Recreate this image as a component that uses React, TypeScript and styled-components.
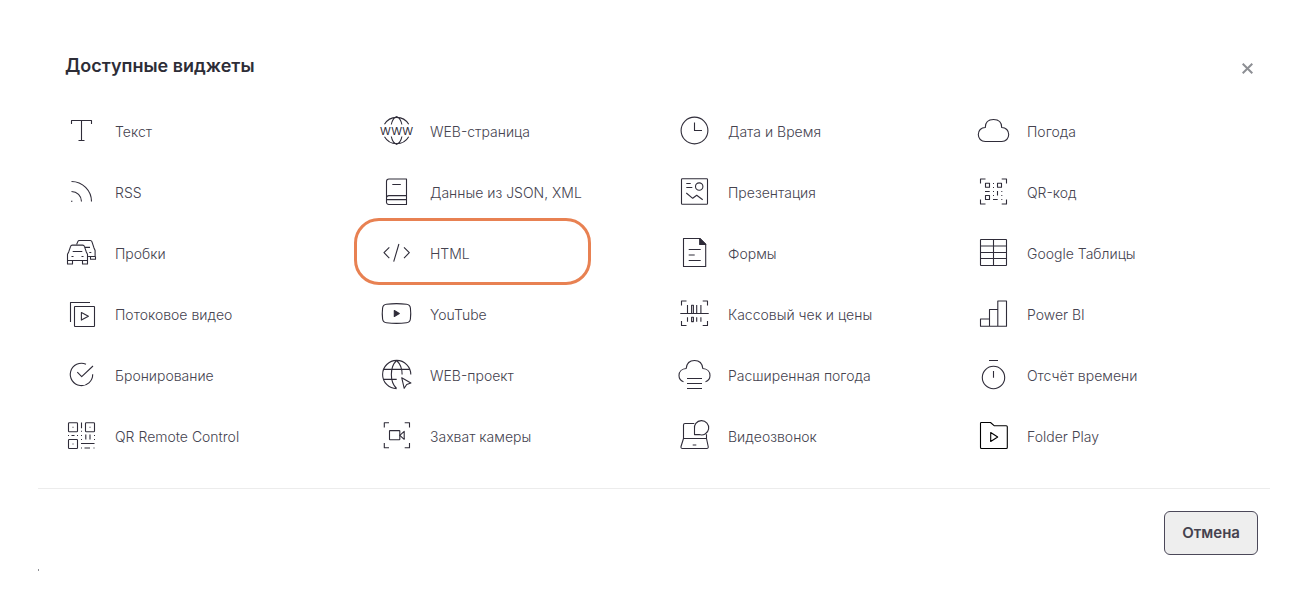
import React from "react";
import styled, { createGlobalStyle } from "styled-components";

const GlobalStyle = createGlobalStyle`
  *, *::before, *::after { box-sizing: border-box; }
  body {
    margin: 0;
    background: #ffffff;
    color: #45434f;
    font-family: Inter, "Open Sans", sans-serif;
  }
`;

const Dialog = styled.section`
  margin: 0 37px 0 38px;
  padding-top: 48px;
`;

const Header = styled.header`
  display: flex;
  align-items: center;
  justify-content: space-between;
  height: 36px;
  padding: 0 12px 0 27px;
`;

const Title = styled.h1`
  margin: 0;
  color: #2d2d37;
  font-size: 18px;
  font-weight: 600;
  line-height: 36px;
`;

const CloseButton = styled.button`
  display: grid;
  place-items: center;
  width: 21px;
  height: 21px;
  margin-top: 5px;
  padding: 0;
  border: 0;
  background: none;
  color: #8d8f94;
  cursor: pointer;
`;

const WidgetGrid = styled.ul`
  display: grid;
  grid-template-columns: 315fr 298fr 299fr 293fr;
  row-gap: 1px;
  margin: 0;
  padding: 17px 0 22px 27px;
  list-style: none;
`;

const WidgetItem = styled.li`
  position: relative;
  min-width: 0;
`;

const WidgetButton = styled.button`
  display: flex;
  align-items: center;
  gap: 18px;
  width: 100%;
  height: 60px;
  padding: 0;
  border: 0;
  background: none;
  color: inherit;
  font: 300 14px/20px Inter, "Open Sans", sans-serif;
  text-align: left;
  white-space: nowrap;
  cursor: pointer;
`;

const WidgetName = styled.span`
  padding-top: 2px;
`;

const Highlight = styled.span`
  position: absolute;
  top: -5px;
  left: -26px;
  width: 237px;
  height: 67px;
  border: 3px solid #e88152;
  border-radius: 25px;
  pointer-events: none;
`;

const IconSvg = styled.svg<{ $dark?: boolean }>`
  flex: none;
  width: 32px;
  height: 32px;
  overflow: visible;
  fill: none;
  stroke: ${(p) => (p.$dark ? "#000000" : "#2f2c39")};
  stroke-width: 1.1;
  stroke-linejoin: round;

  .solid { fill: #2f2c39; }
  .paper { fill: #ffffff; }
  text {
    fill: #2f2c39;
    stroke: none;
    font: 400 11px Inter, sans-serif;
  }
`;

const Footer = styled.footer`
  display: flex;
  justify-content: flex-end;
  padding: 22px 12px 14px 0;
  border-top: 1px solid #ececec;
`;

const CancelButton = styled.button`
  height: 44px;
  padding: 0 17px;
  border: 1px solid #4b4859;
  border-radius: 6px;
  background: #eeeeee;
  color: #45424f;
  font: 600 15px/20px Inter, "Open Sans", sans-serif;
  cursor: pointer;
`;

const Tick = styled.div`
  width: 1px;
  height: 2px;
  background: #8d8f94;
`;

type Widget = {
  name: string;
  icon: React.ReactNode;
  dark?: boolean;
  highlighted?: boolean;
};

const widgets: Widget[] = [
  {
    name: "Текст",
    icon: <path d="M6.5 9V5.5h20V9M16.5 5.5v20M13.5 25.5h6" />,
  },
  {
    name: "WEB-страница",
    icon: (
      <>
        <path d="M4.5 9.3a14 14 0 0 1 24.2 0M4.5 21.7a14 14 0 0 0 24.2 0M16.6 1.5c-2.5 1-4.5 4-5.3 8M16.6 1.5c2.5 1 4.5 4 5.3 8M16.6 29.5c-2.5-1-4.5-4-5.3-8M16.6 29.5c2.5-1 4.5-4 5.3-8" />
        <text x="16.6" y="19.5" textAnchor="middle">WWW</text>
      </>
    ),
  },
  {
    name: "Дата и Время",
    icon: (
      <>
        <circle cx="16.5" cy="15.5" r="13.4" />
        <path d="M16.5 7.5v8H24" />
      </>
    ),
  },
  {
    name: "Погода",
    icon: <path d="M8.3 12.5C8.3 7.6 11.4 4.5 16.5 4.5s8.2 3.1 8.2 8c4.2 0 7 3 7 7s-2.8 7-7 7H8.3c-4.2 0-7-3-7-7s2.8-7 7-7Z" />,
  },
  {
    name: "RSS",
    icon: (
      <>
        <path d="M6.5 5.5a20 20 0 0 1 20 20M6.5 15.5a10 10 0 0 1 10 10" />
        <path d="M6 25.3h1.4" />
      </>
    ),
  },
  {
    name: "Данные из JSON, XML",
    icon: <path d="M6.5 26.5v-21a2.5 2.5 0 0 1 2.5-2.5h17.5v16.6H8.9a2.3 2.3 0 0 0-2.4 2.3M6.5 21.7v4.5a2.3 2.3 0 0 0 2.4 2.3h17.6v-9M6.8 23.6h19.7M12.3 8.5h8.5" />,
  },
  {
    name: "Презентация",
    icon: (
      <>
        <rect x="3.5" y="2.8" width="26" height="25.4" rx=".8" />
        <circle cx="21.2" cy="10.6" r="3.7" />
        <path d="M8.3 7.5h4.4M8.3 11.5h6M8.3 17l6.4 5.3 4-3 6 4.4" />
      </>
    ),
  },
  {
    name: "QR-код",
    icon: (
      <>
        <path d="M3.5 7.5V3h5M24.7 3h4.8v4.5M29.5 23.5V28h-4.8M8.5 28h-5v-4.5" />
        <path d="M8.5 7.3h4v4h-4zM20.5 7.3h4v4h-4zM8.5 19.5h4v4h-4z" />
        <path d="M16 7.5h1M16 11.5h1M8 15.5h4.7M16 15.5h1M20.5 15v4.6M24.3 15.5h1M24.3 19.5h1M24.3 23.5h1M16 23.5h4.7M16 19.5h1" />
      </>
    ),
  },
  {
    name: "Пробки",
    icon: (
      <>
        <path d="M11.6 7.500l1.200-2.900q.4-1.100 1.600-1.100h10.900q1.200 0 1.600 1.200l2 6 1.200 2.800v6h-7M20 10.400h5M24.300 15.500h2M25.500 19.500v2.800h5v-2.800" />
        <path className="paper" d="M2.500 23.500v-6.200l1.200-2.400 1.900-5.500q.4-1.300 1.700-1.300h10.400q1.300 0 1.700 1.300l1.900 5.500 1.200 2.400v6.200z" />
        <path d="M2.500 23.500V27h5v-3.500M17.500 23.500V27h5v-3.500M7.700 14.500h9.600M6.500 19.500h2M16.500 19.500h2" />
      </>
    ),
  },
  {
    name: "HTML",
    highlighted: true,
    icon: <path d="M9.300 10.300 4 15.700l5.300 5.400M24 10.300l5.300 5.400-5.300 5.400M18.900 7l-5.200 17.700" />,
  },
  {
    name: "Формы",
    icon: (
      <>
        <path d="M21.700 1.500H5.500v28h22.200V7.500z" />
        <path className="solid" d="M21.700 1.500v6h6z" />
        <path d="M10.700 12.500h12M10.700 18h6M10.700 23.500h12" />
      </>
    ),
  },
  {
    name: "Google Таблицы",
    icon: (
      <>
        <rect x="3.5" y="2.5" width="26" height="26" rx=".5" />
        <path d="M16.500 2.500v26M3.500 9h26M3.500 15.500h26M3.500 21.500h26" />
      </>
    ),
  },
  {
    name: "Потоковое видео",
    icon: (
      <>
        <path d="M5.500 24V4.500H25" />
        <rect x="9.5" y="8.5" width="20" height="20" rx=".5" />
        <path d="M16.400 14.500v7.600l7-3.800z" />
      </>
    ),
  },
  {
    name: "YouTube",
    icon: (
      <>
        <path d="M6.500 6.200q10-1.200 20 0 3.500.4 3.900 3.800.7 5.500 0 11-.4 3.400-3.900 3.800-10 1.200-20 0-3.500-.4-3.900-3.800-.7-5.500 0-11 .4-3.400 3.900-3.800z" />
        <path className="solid" d="M14.300 12.500v6l5-3z" />
      </>
    ),
  },
  {
    name: "Кассовый чек и цены",
    icon: (
      <>
        <path d="M3.500 7.500V3h5M24.700 3h4.800v4.500M29.500 23v4.500h-4.800M8.500 27.500h-5V23M2.300 15.500h28.400" />
        <path d="M9.500 7v8.500M18.700 7v8.500M22.900 7v8.500M9.500 19.300v4.400M18.700 19.300v4.400M22.900 19.300v4.400M13.600 7.200h1.800v8.300h-1.800zM13.600 19.300h1.800v4.300h-1.800z" />
      </>
    ),
  },
  {
    name: "Power BI",
    icon: <path d="M12.500 21h-9v7.300h9zM12.500 28.300V11.500h8.300v16.800M20.800 28.300V3h8.700v25.300h-17" />,
  },
  {
    name: "Бронирование",
    icon: (
      <>
        <path d="M21 5.200A11.200 11.200 0 1 0 27.700 15.300" />
        <path d="M12.300 13.200l4.400 4.500L28 7" />
      </>
    ),
  },
  {
    name: "WEB-проект",
    icon: (
      <>
        <path d="M16.600 29.600a14.100 14.100 0 1 1 14.200-14.100M16.600 1.500c-7 6.500-7 21.500 0 28M16.600 1.500c3.800 3.500 5.600 8.500 5.500 14M3.500 10.400h26.200M3.500 20.400h13.200" />
        <path d="M21.700 18.700l9.200 5.300-4.200 1.500-2.500 3.800z" />
      </>
    ),
  },
  {
    name: "Расширенная погода",
    icon: <path d="M5.500 22.700C2.500 21.700 1 19.500 1 16.500c0-4 3-6.800 7.200-7C8.700 4.200 11.700 1.500 16.500 1.500s7.800 2.700 8.300 8c4.200.2 7.200 3 7.200 7 0 3-1.500 5.200-4.500 6.200M9 19.500h15M9 24.500h15M9 29.500h15" />,
  },
  {
    name: "Отсчёт времени",
    icon: (
      <>
        <circle cx="16.5" cy="18.5" r="11.2" />
        <path d="M12 1.500h9M16.500 12v6.700" />
      </>
    ),
  },
  {
    name: "QR Remote Control",
    icon: (
      <>
        <rect x="3.5" y="2.7" width="9" height="9" rx=".8" />
        <rect x="20.5" y="2.7" width="9" height="9" rx=".8" />
        <rect x="3.5" y="19.5" width="9" height="9" rx=".8" />
        <path d="M7.500 7.200h1M24.500 7.200h1M7.500 24h1M16.500 2.500v5.800M16 11.300h1M3 15.500h1M6.500 15.500h3M12 15.500h1M16 15.500h1M16 19.500h1M20.800 14.500v5M25 14.500v5M29 15.500h1M29 19.500h1M16 23.500h13.500M16 28h1M19.500 28h5.500M28.500 28h1" />
      </>
    ),
  },
  {
    name: "Захват камеры",
    icon: (
      <>
        <path d="M4.300 7.500V2.800H9M24.700 2.800h4.800v4.700M29.500 23v4.700h-4.800M9 27.700H4.300V23" />
        <rect x="9.5" y="10.6" width="10.3" height="9.2" rx=".5" />
        <path d="M19.800 15.300l4.400-4v8z" />
      </>
    ),
  },
  {
    name: "Видеозвонок",
    icon: (
      <>
        <path d="M16.300 3.500H7q-1.500 0-1.500 1.500v13.500h23v-4.200M5.500 18.500L3 26.500q-.3 2 1.500 2h24.200q1.800 0 1.500-2l-1.700-8M14.700 25h3.600" />
        <path d="M16.500 14.600V9.400a7.200 7.200 0 1 1 4.600 5.200z" />
      </>
    ),
  },
  {
    name: "Folder Play",
    dark: true,
    icon: (
      <>
        <path d="M3.500 3.300q0-.8.800-.8h9.200l3.600 3.200h12.200q1 0 1 1v20.800q0 1-1 1H4.500q-1 0-1-1z" />
        <path d="M13.700 12.500v9l7-4.500z" />
      </>
    ),
  },
];

export default function App() {
  return (
    <>
      <GlobalStyle />
      <Dialog role="dialog" aria-labelledby="widgets-title">
        <Header>
          <Title id="widgets-title">Доступные виджеты</Title>
          <CloseButton type="button" aria-label="Закрыть">
            <svg width="11" height="11" viewBox="0 0 11 11" stroke="currentColor" strokeWidth="2">
              <path d="M.7.700l9.600 9.600M10.300.7.7 10.300" />
            </svg>
          </CloseButton>
        </Header>
        <WidgetGrid>
          {widgets.map((widget) => (
            <WidgetItem key={widget.name}>
              <WidgetButton type="button">
                <IconSvg viewBox="0 0 32 32" $dark={widget.dark} aria-hidden="true">
                  {widget.icon}
                </IconSvg>
                <WidgetName>{widget.name}</WidgetName>
              </WidgetButton>
              {widget.highlighted && <Highlight />}
            </WidgetItem>
          ))}
        </WidgetGrid>
        <Footer>
          <CancelButton type="button">Отмена</CancelButton>
        </Footer>
        <Tick />
      </Dialog>
    </>
  );
}
